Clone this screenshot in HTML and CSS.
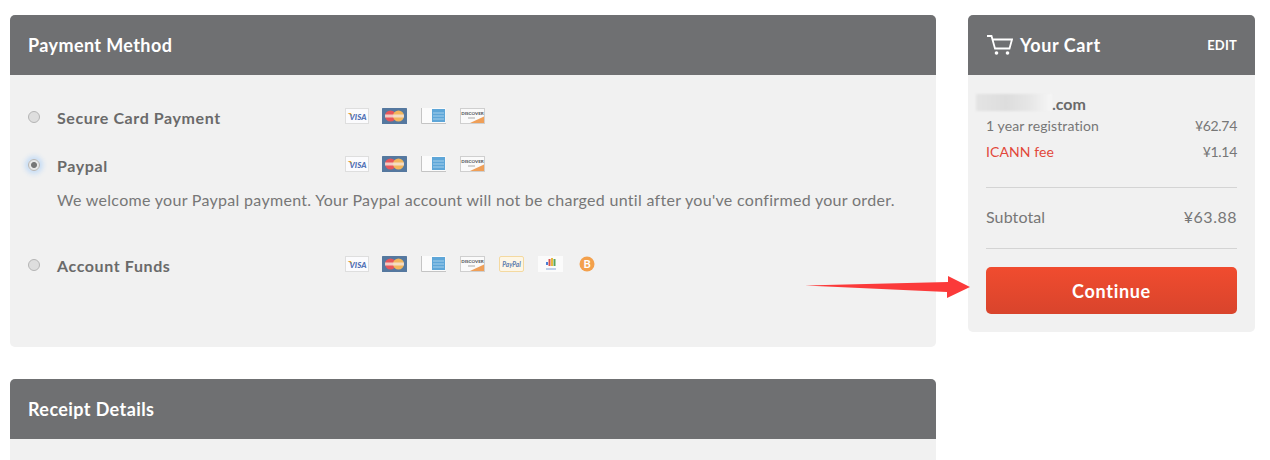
FILE: index.html
```html
<!DOCTYPE html>
<html lang="en">
<head>
<meta charset="UTF-8">
<title>Checkout</title>
<link rel="stylesheet" href="styles.css">
</head>
<body>

<svg class="defs" width="0" height="0">
  <symbol id="visa" viewBox="0 0 25 16">
    <rect x="0.5" y="0.5" width="23" height="15" fill="#fbfbfd" stroke="#dedede"/>
    <path d="M2.500 5h3.500l1 3z" fill="#e9a92f"/>
  </symbol>
  <symbol id="master" viewBox="0 0 25 16">
    <rect width="25" height="16" rx="0.5" fill="#55789f"/>
    <circle cx="8.500" cy="8" r="5.500" fill="#e8555a"/>
    <circle cx="16.500" cy="8" r="5.500" fill="#f3b65c"/>
    <rect x="3" y="6.500" width="19" height="3" fill="#f4e6dc" opacity="0.8"/>
  </symbol>
  <symbol id="amex" viewBox="0 0 25 16">
    <rect x="0.5" y="0" width="24" height="15" fill="#fbfbfb"/>
    <path d="M0.5 0v15.500H25" fill="none" stroke="#c4c4c4" stroke-width="1"/>
    <rect x="11" y="1" width="13" height="13" fill="#5ea6d8"/>
    <path d="M12 5h11M12 8h11M12 11h11" stroke="#a5d0ec" stroke-width="1"/>
  </symbol>
  <symbol id="discover" viewBox="0 0 25 16">
    <rect x="0.5" y="0.5" width="24" height="15" fill="#fafafa" stroke="#cfcfcf"/>
    <path d="M10 15L24 8.500V15z" fill="#ef9f58"/>
    <rect x="8" y="9.500" width="7" height="1" fill="#aaa"/>
  </symbol>
  <symbol id="paypal" viewBox="0 0 25 16">
    <rect x="0.5" y="0.5" width="24" height="15" rx="1.500" fill="#fdf6e6" stroke="#f4d9a0"/>
  </symbol>
  <symbol id="wallet" viewBox="0 0 25 16">
    <rect width="25" height="16" fill="#fbfbfb"/>
    <path d="M9 9V6" stroke="#4a7fd6" stroke-width="2"/>
    <path d="M11.500 10V3" stroke="#d9534f" stroke-width="2"/>
    <path d="M14 10V2" stroke="#e8b83f" stroke-width="2"/>
    <path d="M16.500 10V3" stroke="#58a55c" stroke-width="2"/>
    <rect x="8" y="12" width="10" height="2" fill="#bfd0ea"/>
  </symbol>
  <symbol id="bitcoin" viewBox="0 0 16 16">
    <circle cx="8" cy="8" r="7.500" fill="#f3a04c"/>
  </symbol>
</svg>

<div class="page">
  <main class="main-col">
    <section class="panel payment-panel">
      <h2 class="panel-head">Payment Method</h2>
      <div class="panel-body">
        <div class="pay-option">
          <span class="radio"></span>
          <span class="pay-label">Secure Card Payment</span>
          <span class="card-row">
            <svg class="card card-visa" viewBox="0 0 25 16"><use href="#visa"/><text x="13" y="11.500" class="visa-text">VISA</text></svg>
            <svg class="card" viewBox="0 0 25 16"><use href="#master"/></svg>
            <svg class="card" viewBox="0 0 25 16"><use href="#amex"/></svg>
            <svg class="card" viewBox="0 0 25 16"><use href="#discover"/><text x="12.500" y="7" class="discover-text">DISCOVER</text></svg>
          </span>
        </div>
        <div class="pay-option selected">
          <span class="radio"></span>
          <span class="pay-label">Paypal</span>
          <span class="card-row">
            <svg class="card card-visa" viewBox="0 0 25 16"><use href="#visa"/><text x="13" y="11.500" class="visa-text">VISA</text></svg>
            <svg class="card" viewBox="0 0 25 16"><use href="#master"/></svg>
            <svg class="card" viewBox="0 0 25 16"><use href="#amex"/></svg>
            <svg class="card" viewBox="0 0 25 16"><use href="#discover"/><text x="12.500" y="7" class="discover-text">DISCOVER</text></svg>
          </span>
        </div>
        <p class="pay-note">We welcome your Paypal payment. Your Paypal account will not be charged until after you've confirmed your order.</p>
        <div class="pay-option funds">
          <span class="radio"></span>
          <span class="pay-label">Account Funds</span>
          <span class="card-row">
            <svg class="card card-visa" viewBox="0 0 25 16"><use href="#visa"/><text x="13" y="11.500" class="visa-text">VISA</text></svg>
            <svg class="card" viewBox="0 0 25 16"><use href="#master"/></svg>
            <svg class="card" viewBox="0 0 25 16"><use href="#amex"/></svg>
            <svg class="card" viewBox="0 0 25 16"><use href="#discover"/><text x="12.500" y="7" class="discover-text">DISCOVER</text></svg>
            <svg class="card" viewBox="0 0 25 16"><use href="#paypal"/><text x="12.500" y="10.500" class="paypal-text">PayPal</text></svg>
            <svg class="card card-wallet" viewBox="0 0 25 16"><use href="#wallet"/></svg>
            <svg class="coin" viewBox="0 0 16 16"><use href="#bitcoin"/><text x="8" y="12" class="bitcoin-text">B</text></svg>
          </span>
        </div>
      </div>
    </section>

    <section class="panel receipt-panel">
      <h2 class="panel-head">Receipt Details</h2>
      <div class="receipt-body"></div>
    </section>
  </main>

  <aside class="panel cart">
    <div class="panel-head cart-head">
      <svg class="cart-icon" viewBox="0 0 26 20" fill="none" stroke="#fff" stroke-width="1.800">
        <path d="M0 1h4.500l3.500 12.500h14.500L25 4.500H5.500"/>
        <circle cx="9.500" cy="18" r="1.800" fill="#fff" stroke="none"/>
        <circle cx="20.500" cy="18" r="1.800" fill="#fff" stroke="none"/>
      </svg>
      <h2 class="cart-title">Your Cart</h2>
      <a class="cart-edit">EDIT</a>
    </div>
    <div class="cart-body">
      <div class="domain"><span class="domain-blur"></span>.com</div>
      <div class="line"><span>1 year registration</span><span class="price">¥62.74</span></div>
      <div class="line fee"><span>ICANN fee</span><span class="price">¥1.14</span></div>
      <div class="subtotal"><span>Subtotal</span><span class="total-price">¥63.88</span></div>
      <button class="continue">Continue</button>
    </div>
  </aside>
</div>

<!-- annotation drawn over the screenshot -->
<svg class="arrow" viewBox="0 0 166 24" width="166" height="24">
  <path d="M0 9.500L143 6V0L165 11L142 22V16z" fill="#fb3a3a"/>
</svg>

</body>
</html>
```

FILE: styles.css
```css
html, body {
  margin: 0;
  height: 460px;
  overflow: hidden;
  background: #fff;
}
body {
  font-family: Lato, "Open Sans", Arial, sans-serif;
  color: #6a6a6a;
  position: relative;
}
.defs {
  position: absolute;
}
.page {
  display: flex;
  align-items: flex-start;
  gap: 32px;
  padding: 15px 15px 0 10px;
}
.main-col {
  width: 926px;
  display: flex;
  flex-direction: column;
  gap: 32px;
}
.panel {
  background: #f1f1f1;
  border-radius: 5px;
  overflow: hidden;
}
.panel-head {
  margin: 0;
  height: 60px;
  padding: 0 18px;
  display: flex;
  align-items: center;
  background: #6f7072;
  color: #fff;
  font-size: 18px;
  font-weight: 700;
  letter-spacing: 0.4px;
}
.panel-body {
  height: 272px;
  padding: 0 18px;
  box-sizing: border-box;
}
.pay-option {
  display: flex;
  align-items: center;
  height: 24px;
  padding-top: 31px;
}
.pay-option.selected {
  padding-top: 24px;
}
.pay-option.funds {
  padding-top: 43px;
}
.radio {
  width: 12px;
  height: 12px;
  box-sizing: border-box;
  border: 1px solid #b5b5b5;
  border-radius: 50%;
  background: #dedede;
  margin-right: 17px;
  margin-top: -2px;
  flex: none;
}
.selected .radio {
  background: radial-gradient(circle, #777 0 2.5px, #e8e8e8 3.5px);
  box-shadow: 0 0 5px 3px #c6ddf6;
}
.pay-label {
  width: 288px;
  margin-top: -2px;
  font-size: 16px;
  font-weight: 700;
  letter-spacing: 0.6px;
  color: #6a6a6a;
}
.card-row {
  display: flex;
  align-items: center;
  gap: 14px;
  margin-top: -5px;
}
.card {
  width: 25px;
  height: 16px;
  flex: none;
}
.card-visa {
  margin-right: -2px;
}
.card-wallet {
  margin-right: 2px;
}
.coin {
  width: 16px;
  height: 16px;
}
.visa-text {
  font: italic 900 8px Lato, sans-serif;
  fill: #4f6fb5;
  text-anchor: middle;
}
.discover-text {
  font: 900 4.500px Lato, sans-serif;
  fill: #55585e;
  text-anchor: middle;
}
.paypal-text {
  font: italic 700 6.500px Lato, sans-serif;
  fill: #5b7bad;
  text-anchor: middle;
}
.bitcoin-text {
  font: 700 11px Lato, sans-serif;
  fill: #fff;
  text-anchor: middle;
}
.pay-note {
  margin: 11px 0 0 29px;
  font-size: 16px;
  line-height: 22px;
  letter-spacing: 0.3px;
  color: #777;
  white-space: nowrap;
}
.receipt-body {
  height: 40px;
}
.cart {
  width: 287px;
  flex: none;
}
.cart-head {
  gap: 7px;
}
.cart-icon {
  width: 26px;
  height: 20px;
  margin-left: 1px;
}
.cart-title {
  margin: 0;
  font-size: 18px;
  font-weight: 700;
  letter-spacing: 0.6px;
  flex: 1;
}
.cart-edit {
  font-size: 13px;
  font-weight: 700;
  letter-spacing: 0.2px;
}
.cart-body {
  padding: 19px 18px 18px;
  font-size: 14px;
}
.domain {
  font-size: 16px;
  font-weight: 700;
  line-height: 20px;
  display: flex;
  margin-left: -10px;
}
.domain-blur {
  width: 76px;
  height: 17px;
  background: linear-gradient(90deg, #e4e4e4, #ddd 40%, #e6e6e6 70%, #f6f6f6);
  filter: blur(1px);
}
.line {
  display: flex;
  justify-content: space-between;
  line-height: 20px;
  margin-top: 2px;
  letter-spacing: 0.1px;
  color: #777;
}
.price {
  color: #777;
  letter-spacing: -0.3px;
}
.fee {
  margin-top: 6px;
  color: #e2483a;
}
.subtotal {
  display: flex;
  justify-content: space-between;
  align-items: center;
  height: 56px;
  padding-bottom: 4px;
  margin-top: 25px;
  border-top: 1px solid #d4d4d4;
  border-bottom: 1px solid #d4d4d4;
  font-size: 16px;
  letter-spacing: 0.1px;
  color: #777;
}
.total-price {
  letter-spacing: 0.5px;
}
.continue {
  display: block;
  width: 100%;
  height: 47px;
  margin-top: 18px;
  border: 0;
  border-radius: 5px;
  background: linear-gradient(#f04c2f, #d9442c);
  color: #fff;
  font-family: inherit;
  font-size: 18px;
  font-weight: 700;
  letter-spacing: 0.7px;
}
.arrow {
  position: absolute;
  left: 805px;
  top: 276px;
}
```
